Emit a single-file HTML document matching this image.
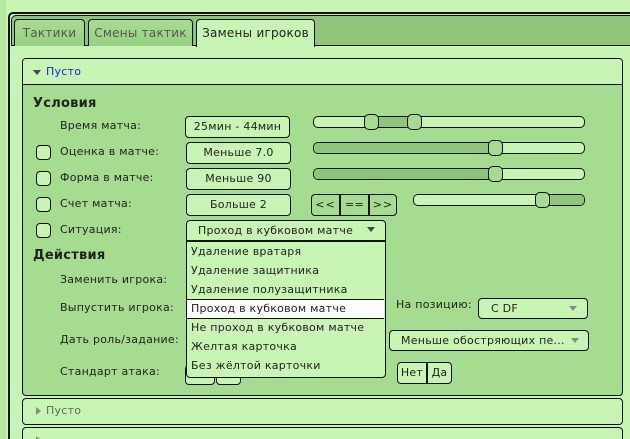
<!DOCTYPE html>
<html><head><meta charset="utf-8"><style>
*{box-sizing:border-box;margin:0;padding:0}
html{width:630px;height:439px;overflow:hidden}
body{width:630px;height:439px;overflow:hidden;background:#c8f5b4;font-family:"DejaVu Sans","Liberation Sans",sans-serif;font-size:11px;color:#222;position:relative;letter-spacing:0.25px}
.a{position:absolute}
.bx{position:absolute;border:1px solid #111;border-radius:4px;background:#c8f5b4;text-align:center;line-height:20px;font-size:11px}
.cb{position:absolute;width:15px;height:15px;border:1px solid #111;border-radius:4px;background:#c8f5b4;left:36px}
.tr{position:absolute;height:12px;border:1px solid #111;border-radius:5px;background:#c8f5b4;overflow:hidden}
.fl{position:absolute;top:0;bottom:0;background:#8fc67a}
.hd{position:absolute;width:15px;height:16px;border:1px solid #111;border-radius:5px;background:#a6dc90}
.lb{position:absolute;font-size:11px}
.dd{position:absolute;left:187px;width:197px;font-size:11px;padding-left:4px;height:19px;line-height:19px}
.arr{position:absolute;width:0;height:0;border-left:4px solid transparent;border-right:4px solid transparent;border-top:5px solid #444}
</style></head><body>
<div class="a" style="left:0;top:0;width:6px;height:439px;background:#b4e89e"></div>
<div class="a" style="left:8px;top:12px;width:630px;height:430px;border:2px solid #111;border-right:none;border-bottom:none;border-radius:5px 0 0 0"></div>
<div class="a" style="left:11px;top:15px;width:625px;height:31px;background:#90c47a;border:1px solid #111;border-right:none;border-radius:5px 0 0 0"></div>
<div class="a" style="left:14px;top:19px;width:71px;height:27px;border:1px solid #111;border-bottom:none;border-radius:4px 4px 0 0;background:linear-gradient(#a8dc92,#98cf82);color:#555;font-size:12px;line-height:27px;text-align:center">Тактики</div>
<div class="a" style="left:88px;top:19px;width:105px;height:27px;border:1px solid #111;border-bottom:none;border-radius:4px 4px 0 0;background:linear-gradient(#a8dc92,#98cf82);color:#555;font-size:12px;line-height:27px;text-align:center">Смены тактик</div>
<div class="a" style="left:196px;top:19px;width:119px;height:28px;border:1px solid #111;border-bottom:none;border-radius:4px 4px 0 0;background:#c8f5b4;color:#222;font-size:12px;line-height:27px;text-align:center">Замены игроков</div>

<div class="a" style="left:22px;top:58px;width:601px;height:338px;border:1px solid #111;border-radius:4px;background:#a6dc90;overflow:hidden">
 <div class="a" style="left:0;top:0;width:600px;height:26px;background:#c8f5b4;border-bottom:1px solid #111"></div>
</div>
<div class="arr" style="left:33px;top:70px;border-top-color:#444"></div>
<div class="lb" style="left:46px;top:65px;color:#1a1aff">Пусто</div>

<div class="lb" style="left:33px;top:96px;font-weight:bold;font-size:13px">Условия</div>
<div class="lb" style="left:60px;top:119px">Время матча:</div>
<div class="cb" style="top:145px"></div><div class="lb" style="left:60px;top:145px">Оценка в матче:</div>
<div class="cb" style="top:171px"></div><div class="lb" style="left:60px;top:171px">Форма в матче:</div>
<div class="cb" style="top:197px"></div><div class="lb" style="left:60px;top:197px">Счет матча:</div>
<div class="cb" style="top:223px"></div><div class="lb" style="left:60px;top:223px">Ситуация:</div>

<div class="bx" style="left:185px;top:116px;width:105px;height:22px">25мин - 44мин</div>
<div class="bx" style="left:186px;top:142px;width:105px;height:22px">Меньше 7.0</div>
<div class="bx" style="left:186px;top:168px;width:105px;height:22px">Меньше 90</div>
<div class="bx" style="left:186px;top:194px;width:105px;height:22px">Больше 2</div>

<div class="tr" style="left:313px;top:116px;width:272px"><div class="fl" style="left:57px;width:44px"></div></div>
<div class="hd" style="left:364px;top:114px"></div><div class="hd" style="left:407px;top:114px"></div>
<div class="tr" style="left:313px;top:142px;width:272px"><div class="fl" style="left:0;width:180px"></div></div>
<div class="hd" style="left:488px;top:140px"></div>
<div class="tr" style="left:313px;top:168px;width:272px"><div class="fl" style="left:0;width:180px"></div></div>
<div class="hd" style="left:488px;top:166px"></div>
<div class="tr" style="left:413px;top:194px;width:172px"><div class="fl" style="left:130px;right:0"></div></div>
<div class="hd" style="left:535px;top:192px"></div>
<div class="bx" style="left:311px;top:194px;width:29px;height:22px;background:#a6dc90;border-radius:4px 0 0 4px;letter-spacing:1px">&lt;&lt;</div>
<div class="bx" style="left:340px;top:194px;width:29px;height:22px;background:#a6dc90;border-radius:0">==</div>
<div class="bx" style="left:369px;top:194px;width:28px;height:22px;background:#a6dc90;border-radius:0 4px 4px 0;letter-spacing:1px">&gt;&gt;</div>

<div class="lb" style="left:33px;top:248px;font-weight:bold;font-size:13px">Действия</div>
<div class="lb" style="left:60px;top:273px">Заменить игрока:</div>
<div class="lb" style="left:60px;top:301px">Выпустить игрока:</div>
<div class="lb" style="left:60px;top:333px">Дать роль/задание:</div>
<div class="lb" style="left:60px;top:365px">Стандарт атака:</div>
<div class="bx" style="left:185px;top:365px;width:30px;height:20px"></div>
<div class="bx" style="left:216px;top:365px;width:25px;height:20px"></div>

<div class="lb" style="left:396px;top:298px">На позицию:</div>
<div class="bx" style="left:478px;top:298px;width:110px;height:21px;text-align:left;padding-left:12px;line-height:19px">C DF</div>
<div class="arr" style="left:569px;top:306px;border-top-color:#888"></div>
<div class="bx" style="left:389px;top:330px;width:200px;height:21px;text-align:left;padding-left:11px;line-height:19px">Меньше обостряющих пе...</div>
<div class="arr" style="left:571px;top:338px;border-top-color:#888"></div>
<div class="bx" style="left:397px;top:362px;width:30px;height:22px;border-radius:4px 0 0 4px;line-height:20px">Нет</div>
<div class="bx" style="left:427px;top:362px;width:25px;height:22px;border-radius:0 4px 4px 0;line-height:20px">Да</div>

<div class="bx" style="left:186px;top:220px;width:200px;height:21px;line-height:19px;text-align:left;padding-left:11px;border-radius:4px 4px 0 0">Проход в кубковом матче</div>
<div class="arr" style="left:367px;top:227px"></div>
<div class="a" style="left:186px;top:240px;width:200px;height:138px;border:1px solid #111;border-top:2px solid #111;border-radius:0 0 4px 4px;background:#c8f5b4"></div>
<div class="dd" style="top:242px">Удаление вратаря</div>
<div class="dd" style="top:261px">Удаление защитника</div>
<div class="dd" style="top:280px">Удаление полузащитника</div>
<div class="dd" style="top:299px;background:#fff;border-top:1px solid #111;border-bottom:1px solid #111;height:20px;line-height:18px">Проход в кубковом матче</div>
<div class="dd" style="top:318px">Не проход в кубковом матче</div>
<div class="dd" style="top:337px">Желтая карточка</div>
<div class="dd" style="top:356px">Без жёлтой карточки</div>

<div class="a" style="left:22px;top:398px;width:601px;height:27px;border:1px solid #111;border-radius:4px;background:#c8f5b4"></div>
<div class="a" style="left:36px;top:407px;width:0;height:0;border-top:4px solid transparent;border-bottom:4px solid transparent;border-left:5px solid #888"></div>
<div class="lb" style="left:46px;top:404px;color:#666">Пусто</div>
<div class="a" style="left:22px;top:427px;width:601px;height:27px;border:1px solid #111;border-radius:4px;background:#c8f5b4"></div>
<div class="a" style="left:36px;top:436px;width:0;height:0;border-top:4px solid transparent;border-bottom:4px solid transparent;border-left:5px solid #888"></div>
</body></html>
